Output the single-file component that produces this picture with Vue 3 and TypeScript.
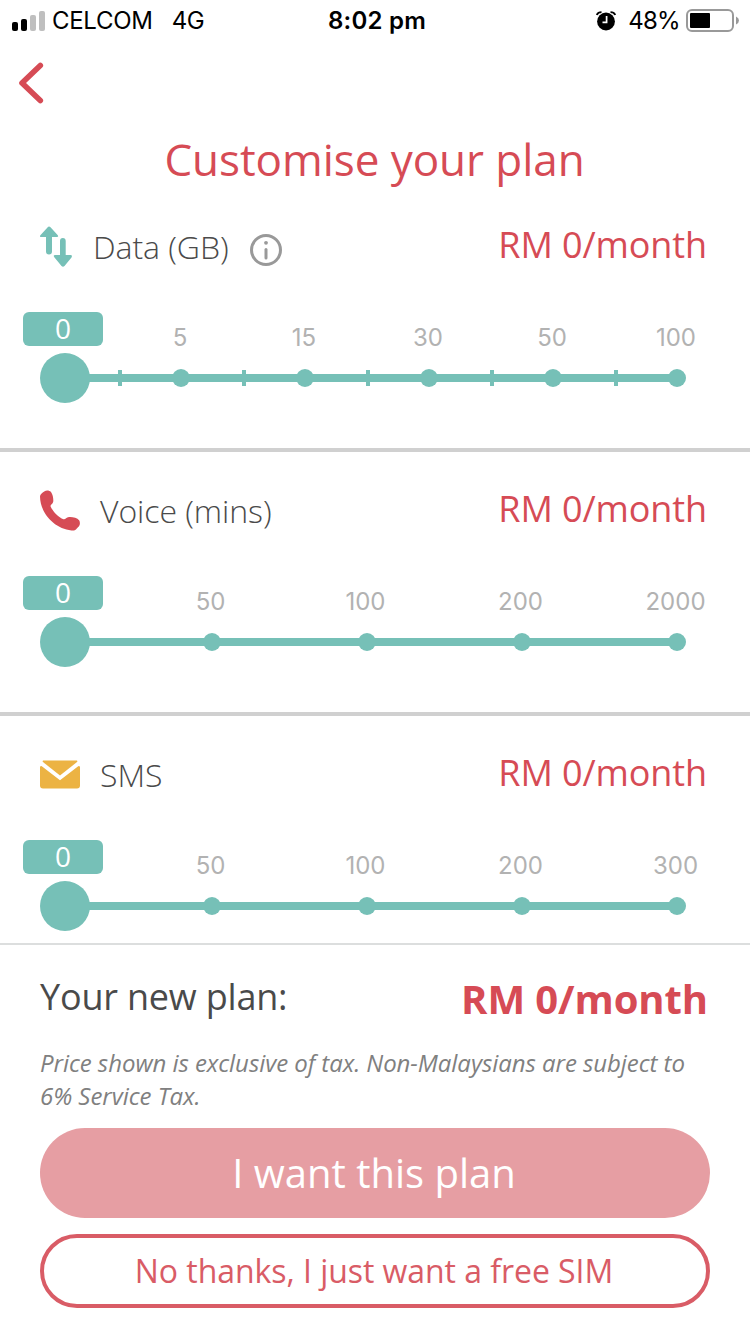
<script setup lang="ts">
interface Section {
  key: 'data' | 'voice' | 'sms'
  label: string
  stops: string[]
  ticks: boolean
}

const sections: Section[] = [
  { key: 'data', label: 'Data (GB)', stops: ['5', '15', '30', '50', '100'], ticks: true },
  { key: 'voice', label: 'Voice (mins)', stops: ['50', '100', '200', '2000'], ticks: false },
  { key: 'sms', label: 'SMS', stops: ['50', '100', '200', '300'], ticks: false },
]

const trackEnd = 677

// Distance between neighbouring stops on the track.
function step(s: Section): number {
  return s.ticks ? 124 : 155
}

function stopX(s: Section, i: number): number {
  return trackEnd - (s.stops.length - 1 - i) * step(s)
}
</script>

<template>
  <div class="screen">
    <header class="status">
      <div class="side left">
        <svg class="signal" width="34" height="20" viewBox="0 0 34 20">
          <rect x="0" y="11" width="6" height="9" rx="2" fill="#000" />
          <rect x="9" y="8" width="6" height="12" rx="2" fill="#000" />
          <rect x="18" y="4" width="6" height="16" rx="2" fill="#bfbfbf" />
          <rect x="27" y="0" width="6" height="20" rx="2" fill="#bfbfbf" />
        </svg>
        <span class="carrier">CELCOM</span>
        <span class="network">4G</span>
      </div>
      <div class="time">8:02 pm</div>
      <div class="side right">
        <svg class="alarm" width="20" height="20" viewBox="0 0 20 20">
          <circle cx="10" cy="10.500" r="8.900" fill="#000" />
          <path d="M0.800 4 Q2 1.200 5.500 1.200 M19.200 4 Q18 1.200 14.500 1.200" fill="none" stroke="#000" stroke-width="1.800" />
          <path d="M10.600 5 V11.300 H6.500" fill="none" stroke="#fff" stroke-width="1.700" />
        </svg>
        <span class="percent">48%</span>
        <svg class="battery" width="54" height="24" viewBox="0 0 54 24">
          <rect x="1" y="1" width="46" height="21" rx="5" fill="none" stroke="#999" stroke-width="2" />
          <rect x="4" y="4" width="20" height="15" rx="1" fill="#000" />
          <path d="M50 7.500 Q53 9 53 11.500 Q53 14 50 15.500 Z" fill="#999" />
        </svg>
      </div>
    </header>

    <nav class="nav">
      <svg width="26" height="42" viewBox="0 0 26 42">
        <path d="M22.300 3.500 L4 21 L22.300 38.500" fill="none" stroke="#d64b55" stroke-width="5.600" stroke-linecap="round" stroke-linejoin="round" />
      </svg>
    </nav>

    <h1 class="title"><span>Customise your plan</span></h1>

    <main class="sections">
      <section v-for="s in sections" :key="s.key" class="section" :class="s.key">
        <div class="head">
          <svg v-if="s.key === 'data'" class="icon" width="32" height="41" viewBox="0 0 32 41">
            <path d="M9 0.500 Q9.800 0.500 10.500 1.200 L17.600 9 Q19 11 17 11 H12 V25.500 Q12 28.500 9 28.500 Q6 28.500 6 25.500 V11 H1.500 Q-1 11 0.600 9 L7.700 1.200 Q8.300 0.500 9 0.500 Z" fill="#76c0b7" />
            <path d="M23 40.700 Q23.700 40.700 24.500 40 L31.500 31.500 Q32.700 29 30.500 29 H25.700 V15 Q25.700 12 22.800 12 Q20 12 20 15 V29 H15.200 Q12.800 29 14.300 31.300 L21.500 40 Q22.300 40.700 23 40.700 Z" fill="#76c0b7" />
          </svg>
          <svg v-else-if="s.key === 'voice'" class="icon" width="40" height="41" viewBox="0 0 40 41">
            <path d="M4.200 1.400 C6.500 0 9.200 0.200 11 2 C12.800 4.500 13.400 8 13.300 11 C13.200 14 10.200 14.500 10.600 16.500 C12.500 21 18 27 23.500 29.300 C25.500 29.800 26 27.300 29 27 C32.500 26.800 37 27.500 39.300 30.500 C40.500 33 39.800 36 38 37.200 C36.500 38.500 36 40 34 40.500 C17 40.500 0.300 25 0 6.500 C0 4 2.300 3 4.200 1.400 Z" fill="#d64b55" />
          </svg>
          <svg v-else class="icon" width="40" height="30" viewBox="0 0 40 30">
            <path d="M3 0.600 H37 Q37.500 1.400 37.300 1.800 L20 15.400 L2.700 1.800 Q2.500 1.400 3 0.600 Z" fill="#ecb343" />
            <path d="M0 7 Q0.500 5.500 1.800 6.200 L20 20.300 L38.200 6.200 Q39.500 5.500 40 7 V25.600 Q40 28.600 37 28.600 H3 Q0 28.600 0 25.600 Z" fill="#ecb343" />
          </svg>
          <span class="label">{{ s.label }}</span>
          <svg v-if="s.key === 'data'" class="info" width="32" height="32" viewBox="0 0 32 32">
            <circle cx="16" cy="16" r="14.500" fill="none" stroke="#999" stroke-width="3" />
            <circle cx="16" cy="8.800" r="1.900" fill="#999" />
            <path d="M16 15.500 V24" stroke="#999" stroke-width="3" stroke-linecap="round" />
          </svg>
          <span class="price">RM 0/month</span>
        </div>
        <div class="scale">
          <span class="badge">0</span>
          <div class="stops">
            <span v-for="v in s.stops" :key="v" class="stop">{{ v }}</span>
          </div>
        </div>
        <svg class="track" width="750" height="50" viewBox="0 0 750 50">
          <rect x="65" y="21" width="612" height="8" fill="#76c0b7" />
          <circle cx="65" cy="25" r="25" fill="#76c0b7" />
          <template v-for="(v, i) in s.stops" :key="v">
            <rect v-if="s.ticks" :x="stopX(s, i) - 63" y="17" width="4" height="16" fill="#76c0b7" />
            <circle :cx="stopX(s, i)" cy="25" r="9" fill="#76c0b7" />
          </template>
        </svg>
      </section>
    </main>

    <footer class="footer">
      <div class="total">
        <span class="total-label">Your new plan:</span>
        <span class="total-price">RM 0/month</span>
      </div>
      <p class="note">Price shown is exclusive of tax. Non-Malaysians are subject to<br />6% Service Tax.</p>
      <button class="primary"><span>I want this plan</span></button>
      <button class="secondary"><span>No thanks, I just want a free SIM</span></button>
    </footer>
  </div>
</template>

<style>
body {
  margin: 0;
  background: #fff;
}
</style>

<style scoped>
* {
  box-sizing: border-box;
}
.screen {
  width: 750px;
  height: 1334px;
  overflow: hidden;
  display: flex;
  flex-direction: column;
  background: #fff;
  color: #4a4a4a;
  font-family: "Open Sans", "Noto Sans", sans-serif;
  white-space: nowrap;
}
svg {
  display: block;
  flex: none;
}
.status {
  height: 40px;
  flex: none;
  display: grid;
  grid-template-columns: 300px 154px 296px;
  align-items: center;
  color: #000;
  font-family: Inter, sans-serif;
  font-size: 24px;
  line-height: 42px;
}
.side {
  display: flex;
  align-items: center;
  height: 40px;
}
.left {
  padding-left: 12px;
}
.carrier {
  margin-left: 6px;
  letter-spacing: -0.3px;
}
.network {
  margin-left: 19px;
  letter-spacing: -0.3px;
}
.time {
  text-align: center;
  font-weight: 600;
  letter-spacing: 0.25px;
}
.right {
  justify-content: flex-end;
  padding-right: 10px;
}
.percent {
  margin: 0 6px 0 12px;
  letter-spacing: -0.7px;
}
.battery {
  margin-top: 0;
}
.nav {
  height: 86px;
  flex: none;
  padding: 22px 0 0 18px;
}
.title {
  height: 62px;
  flex: none;
  margin: 0;
  padding: 3px 1px 0 0;
  text-align: center;
  font-size: 44px;
  line-height: 60px;
  font-weight: 400;
  letter-spacing: -0.05px;
  color: #d64b55;
}
.sections {
  height: 755px;
  flex: none;
  overflow: hidden;
}
.section {
  height: 264px;
  border-bottom: 4px solid #d0d0d0;
}
.head {
  height: 124px;
  display: flex;
  align-items: flex-start;
  padding: 38px 43px 0 40px;
}
.label {
  margin: 1px 0 0 20px;
  font-size: 32px;
  line-height: 40px;
  font-weight: 300;
  letter-spacing: -0.06px;
}
.data .label {
  margin-left: 21px;
}
.info {
  margin: 8px 0 0 21px;
}
.sms .icon {
  margin-top: 6px;
}
.price {
  margin: -1px 0 0 auto;
  font-size: 36px;
  line-height: 40px;
  letter-spacing: -0.1px;
  color: #d64b55;
}
.scale {
  height: 34px;
  display: flex;
}
.badge {
  width: 80px;
  height: 34px;
  flex: none;
  margin-left: 23px;
  border-radius: 6px;
  background: #76c0b7;
  color: #fff;
  font-size: 28px;
  line-height: 33px;
  text-align: center;
}
.stops {
  display: flex;
  margin: 11px 0 0 30px;
}
.data .stops {
  margin-left: 15px;
}
.stop {
  width: 155px;
  flex: none;
  text-align: center;
  font-family: Inter, sans-serif;
  font-size: 24px;
  line-height: 30px;
  color: #b2b2b2;
}
.data .stop {
  width: 124px;
}
.track {
  margin-top: 7px;
}
.footer {
  height: 391px;
  flex: none;
  border-top: 2px solid #dcdede;
  padding: 0 40px;
}
.total {
  height: 101px;
  display: flex;
  justify-content: space-between;
  padding: 32px 2px 0 0;
}
.total-label {
  font-size: 36px;
  line-height: 40px;
  letter-spacing: -0.2px;
}
.total-price {
  margin-top: 2px;
  font-size: 40px;
  line-height: 40px;
  font-weight: 700;
  letter-spacing: -0.1px;
  color: #d64b55;
}
.note {
  height: 82px;
  margin: 0;
  font-size: 24px;
  line-height: 33px;
  font-style: italic;
  letter-spacing: -0.055px;
  color: #808080;
}
button {
  display: block;
  width: 670px;
  padding: 0 2px 0 0;
  border: 0;
  font-family: inherit;
  text-align: center;
}
.primary {
  height: 90px;
  border-radius: 45px;
  background: #e69ea3;
  color: #fff;
  font-size: 40px;
  line-height: 90px;
}
.secondary {
  height: 74px;
  margin-top: 16px;
  border: 4px solid #d95c66;
  border-radius: 37px;
  background: #fff;
  color: #d95c66;
  font-size: 32px;
  line-height: 66px;
  letter-spacing: -0.05px;
}
</style>
